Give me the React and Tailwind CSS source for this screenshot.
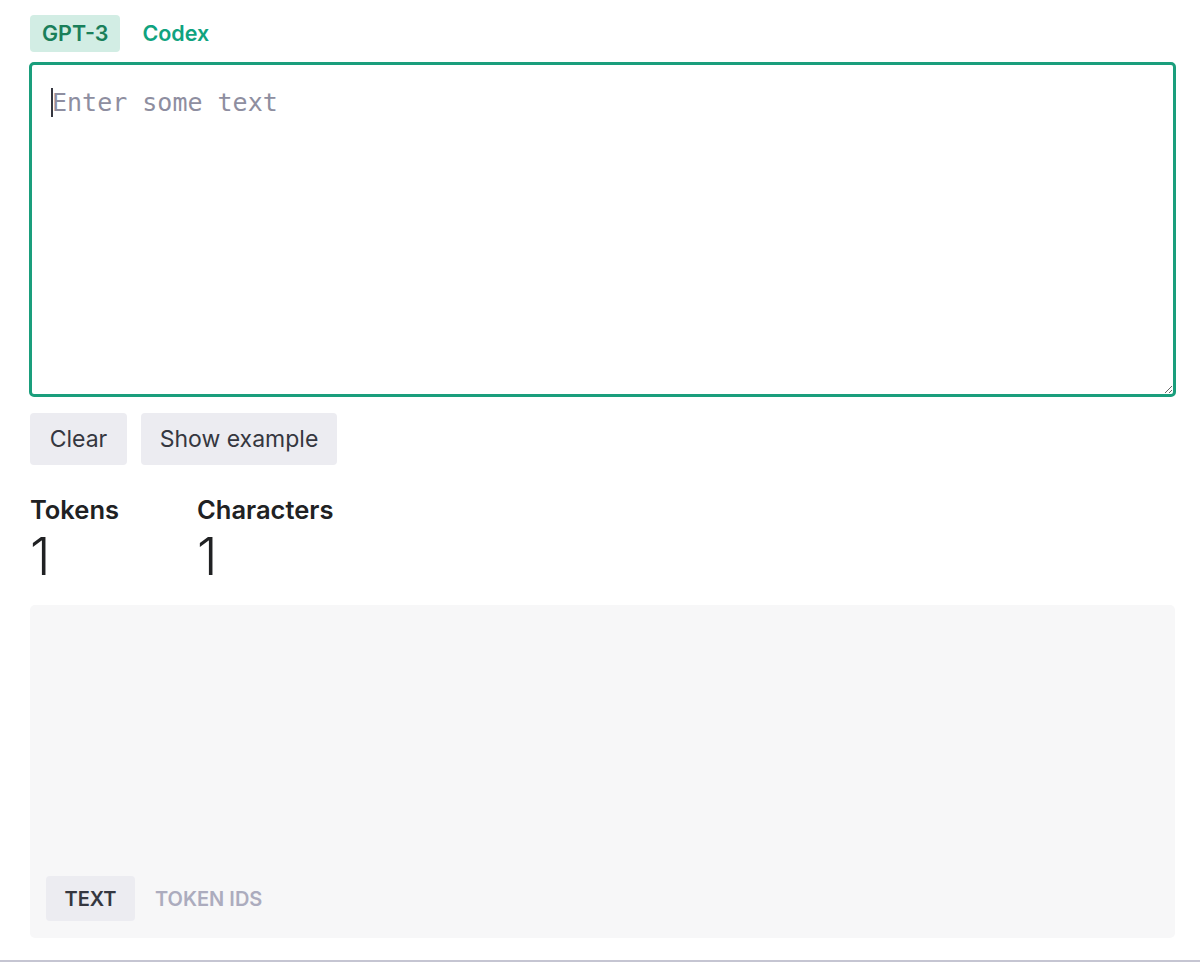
import React from "react";

const sans = { fontFamily: "Inter, 'Noto Sans', sans-serif" };

const App = () => {
  return (
    <div className="w-[1200px] h-[962px] bg-white flex flex-col" style={sans}>
      <div className="pl-[29px] pt-[15px] w-[1176px] flex flex-col">
        {/* Model tabs */}
        <div className="flex items-center gap-[10px] pl-px">
          <button className="h-[37px] px-[12px] rounded-[4px] bg-[#d2ede4] text-[#1a7f5a] text-[21.5px] font-semibold">
            GPT-3
          </button>
          <button className="h-[37px] px-[12px] text-[#10a37f] text-[21.5px] font-semibold">
            Codex
          </button>
        </div>

        {/* Input */}
        <div className="relative mt-[10px]">
          <textarea
            placeholder="Enter some text"
            className="block h-[335px] w-full rounded-[5px] border-[3px] border-[#1a9e7c] outline-none px-[20px] pt-[19px] pb-[22px] text-[25px] text-[#353740] placeholder:text-[#8e8ea0] resize-y"
            style={{ fontFamily: "'DejaVu Sans Mono', 'Liberation Mono', monospace" }}
          />
          <span className="absolute left-[22px] top-[26px] w-[2px] h-[29px] bg-[#353740]" />
        </div>

        {/* Actions */}
        <div className="flex gap-[14px] mt-[16px] pl-px">
          <button className="h-[52px] w-[97px] rounded-[4px] bg-[#ececf1] text-[23px] text-[#353740]">
            Clear
          </button>
          <button className="h-[52px] w-[196px] rounded-[4px] bg-[#ececf1] text-[23px] text-[#353740]">
            Show example
          </button>
        </div>

        {/* Stats */}
        <div className="flex mt-[30px] pl-px text-[#202123]">
          <div className="w-[167px] flex flex-col">
            <span className="text-[25.5px] font-semibold leading-[30px]">Tokens</span>
            <span className="text-[52px] font-light leading-[56px] mt-[4px]">1</span>
          </div>
          <div className="flex flex-col">
            <span className="text-[25.5px] font-semibold leading-[30px]">Characters</span>
            <span className="text-[52px] font-light leading-[56px] mt-[4px]">1</span>
          </div>
        </div>

        {/* Output */}
        <div className="mt-[20px] ml-px w-[1145px] h-[333px] rounded-[5px] bg-[#f7f7f8] flex flex-col justify-end px-[16px] pb-[17px]">
          <div className="flex items-center gap-[20px]">
            <button className="h-[45px] w-[89px] rounded-[4px] bg-[#ececf1] text-[20px] font-semibold text-[#353740]">
              TEXT
            </button>
            <button className="h-[45px] text-[20px] font-semibold text-[#acacbe]">
              TOKEN IDS
            </button>
          </div>
        </div>
      </div>
      <div className="mt-auto h-[2px] bg-[#c5c5d2]" />
    </div>
  );
};

export default App;
